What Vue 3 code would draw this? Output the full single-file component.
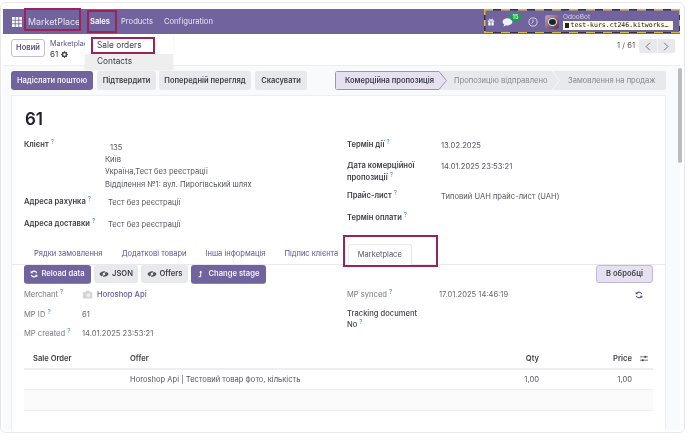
<script setup>
const leftRows = [
  { label: 'Адреса рахунка', value: 'Тест без реєстрації' },
  { label: 'Адреса доставки', value: 'Тест без реєстрації' },
]
const tabs = ['Рядки замовлення', 'Додаткові товари', 'Інша інформація', 'Підпис клієнта']
const actions = ['Підтвердити', 'Попередній перегляд', 'Скасувати']
</script>

<template>
  <div class="page">
    <div class="frame">
      <header class="nav">
        <svg class="apps" viewBox="0 0 9 9" width="10" height="10">
          <g fill="#fff">
            <rect x="0" y="0" width="2.5" height="2.5" /><rect x="3.25" y="0" width="2.5" height="2.5" /><rect x="6.5" y="0" width="2.5" height="2.5" />
            <rect x="0" y="3.25" width="2.5" height="2.5" /><rect x="3.25" y="3.25" width="2.5" height="2.5" /><rect x="6.5" y="3.25" width="2.5" height="2.5" />
            <rect x="0" y="6.5" width="2.5" height="2.5" /><rect x="3.25" y="6.5" width="2.5" height="2.5" /><rect x="6.5" y="6.5" width="2.5" height="2.5" />
          </g>
        </svg>
        <span class="brand">MarketPlace</span>
        <span class="menu strong">Sales</span>
        <span class="menu products">Products</span>
        <span class="menu config">Configuration</span>
        <div class="systray">
          <svg class="gift" viewBox="0 0 10 10" width="8" height="8">
            <path fill="#fff" d="M1 3h3.5v1.6H1zM5.5 3H9v1.6H5.5zM1.6 5.4h2.9V9.5H1.6zM5.5 5.4h2.9V9.5H5.5z" />
            <path fill="none" stroke="#fff" stroke-width=".9" d="M5 3C4 .6 2.4.8 2.8 2 3 2.7 4 3 5 3c1 0 2-.3 2.2-1C7.6.8 6 .6 5 3z" />
          </svg>
          <span class="chat">
            <svg viewBox="0 0 12 10" width="11" height="9">
              <path fill="#f2f0f7" d="M6 .4c3 0 5.5 1.7 5.5 3.9S9 8.2 6 8.2c-.6 0-1.2 0-1.7-.2L1.6 9.6l.7-2.4C1.200 6.500.5 5.400.5 4.300.5 2.100 3 .4 6 .4z" />
            </svg>
            <span class="badge">15</span>
          </span>
          <svg class="clock" viewBox="0 0 12 12" width="10" height="10">
            <circle cx="6" cy="6" r="4.9" fill="none" stroke="#e8e5f0" stroke-width="1" />
            <path fill="none" stroke="#e8e5f0" stroke-width="1" d="M6 3v3.100L4.100 8" />
          </svg>
          <span class="avatar"><i></i></span>
          <div class="user">
            <span class="user-name">OdooBot</span>
            <span class="db"><i class="db-icon"></i>test-kurs.ct246.kitworks…</span>
          </div>
        </div>
      </header>

      <section class="control">
        <button class="new">Новий</button>
        <div class="crumb">
          <span class="crumb-top">Marketplace</span>
          <span class="crumb-id">61
            <svg viewBox="0 0 10 10" width="7" height="7">
              <circle cx="5" cy="5" r="2.900" fill="none" stroke="#444" stroke-width="2" />
              <path stroke="#444" stroke-width="1.500" d="M5 .3v1.500M5 8.200v1.500M.3 5h1.500M8.200 5h1.500M1.700 1.700l1 1M7.300 7.300l1 1M8.300 1.700l-1 1M2.700 7.300l-1 1" />
            </svg>
          </span>
        </div>
        <div class="pager">
          <span class="pager-text">1 / 61</span>
          <div class="pager-btns">
            <span class="pager-btn">
              <svg viewBox="0 0 8 12" width="6" height="9"><path fill="none" stroke="#666" stroke-width="1.200" d="M6.500 1 1.500 6l5 5" /></svg>
            </span>
            <span class="pager-btn">
              <svg viewBox="0 0 8 12" width="6" height="9"><path fill="none" stroke="#666" stroke-width="1.200" d="M1.500 1l5 5-5 5" /></svg>
            </span>
          </div>
        </div>
      </section>

      <div class="body">
        <main class="content">
          <div class="actionbar">
            <div class="actions">
              <button class="btn primary">Надіслати поштою</button>
              <button v-for="a in actions" :key="a" class="btn grey">{{ a }}</button>
            </div>
            <div class="status">
              <div class="stage active">
                <svg class="stage-bg" viewBox="0 0 112 19" preserveAspectRatio="none">
                  <path d="M.5.500H104L111.500 9.500 104 18.500H.5z" fill="#e6e1f0" stroke="#9d91c0" />
                </svg>
                <span>Комерційна пропозиція</span>
              </div>
              <div class="stage second">
                <span>Пропозицію відправлено</span>
                <svg class="sep" viewBox="0 0 8 19" width="8" height="19"><path fill="none" stroke="#f6f6f8" d="M0 0l7.500 9.500L0 19" /></svg>
              </div>
              <div class="stage third"><span>Замовлення на продаж</span></div>
            </div>
          </div>

          <div class="sheet">
            <h1 class="title">61</h1>
            <div class="form">
              <div class="col left">
                <div class="client">
                  <span class="label">Клієнт<sup>?</sup></span>
                  <div class="address">
                    <span class="num">135</span>
                    <span>Київ</span>
                    <span>Україна,Тест без реєстрації</span>
                    <span>Відділення №1: вул. Пирогівський шлях</span>
                  </div>
                </div>
                <div v-for="r in leftRows" :key="r.label" class="addr-row">
                  <span class="label">{{ r.label }}<sup>?</sup></span>
                  <span class="addr-val">{{ r.value }}</span>
                </div>
              </div>
              <div class="col right">
                <div class="r-row r1">
                  <span class="label">Термін дії<sup>?</sup></span>
                  <span class="val">13.02.2025</span>
                </div>
                <div class="r-row r2">
                  <span class="label">Дата комерційної<br />пропозиції<sup>?</sup></span>
                  <span class="val">14.01.2025 23:53:21</span>
                </div>
                <div class="r-row r3">
                  <span class="label">Прайс-лист<sup>?</sup></span>
                  <span class="val">Типовий UAH прайс-лист (UAH)</span>
                </div>
                <div class="r-row r4">
                  <span class="label">Термін оплати<sup>?</sup></span>
                </div>
              </div>
            </div>

            <nav class="tabs">
              <span v-for="t in tabs" :key="t" class="tab">{{ t }}</span>
              <span class="tab current">Marketplace</span>
            </nav>

            <div class="pane">
              <div class="pane-btns">
                <button class="mp primary">
                  <svg viewBox="0 0 12 12" width="8" height="8">
                    <path fill="none" stroke="#fff" stroke-width="1.700" d="M10.200 4.600A4.500 4.500 0 0 0 2.200 3.800M1.800 7.400a4.500 4.500 0 0 0 8 .8" />
                    <path fill="#fff" d="M1 1v4h4zM11 11V7H7z" />
                  </svg>
                  Reload data
                </button>
                <button class="mp grey">
                  <svg viewBox="0 0 14 10" width="10" height="8">
                    <path fill="#555" d="M7 1C4 1 1.500 3 .5 5c1 2 3.500 4 6.500 4s5.500-2 6.500-4C12.500 3 10 1 7 1z" />
                    <circle cx="7" cy="5" r="1.800" fill="#e7e9ed" />
                    <path stroke="#e7e9ed" stroke-width="1.100" d="M10 0 4 10" />
                  </svg>
                  JSON
                </button>
                <button class="mp grey">
                  <svg viewBox="0 0 14 10" width="10" height="8">
                    <path fill="#555" d="M7 1C4 1 1.500 3 .5 5c1 2 3.500 4 6.500 4s5.500-2 6.500-4C12.500 3 10 1 7 1z" />
                    <circle cx="7" cy="5" r="1.800" fill="#e7e9ed" />
                    <path stroke="#e7e9ed" stroke-width="1.100" d="M10 0 4 10" />
                  </svg>
                  Offers
                </button>
                <button class="mp primary">
                  <svg viewBox="0 0 10 12" width="6" height="8">
                    <path fill="none" stroke="#fff" stroke-width="1.600" d="M1 10.500h3.500V2" />
                    <path fill="#fff" d="M1.800 3.500 4.500.5l2.700 3z" />
                  </svg>
                  &nbsp;Change stage
                </button>
                <button class="stage-btn">В обробці</button>
              </div>

              <div class="mp-fields">
                <div class="mp-col">
                  <div class="mp-row merchant">
                    <span class="mp-label">Merchant<sup>?</sup></span>
                    <span class="link">
                      <svg viewBox="0 0 14 11" width="11" height="9">
                        <path fill="#d5d5d8" d="M1 2.500h3L5.200.8h4L10.400 2.500H13V10.500H1z" />
                        <circle cx="8" cy="6.500" r="2.200" fill="#f2f2f3" />
                      </svg>
                      Horoshop Api
                    </span>
                  </div>
                  <div class="mp-row mpid">
                    <span class="mp-label">MP ID<sup>?</sup></span>
                    <span>61</span>
                  </div>
                  <div class="mp-row created">
                    <span class="mp-label">MP created<sup>?</sup></span>
                    <span>14.01.2025 23:53:21</span>
                  </div>
                </div>
                <div class="mp-col rightcol">
                  <div class="mp-row synced">
                    <span class="mp-label wide">MP synced<sup>?</sup></span>
                    <span>17.01.2025 14:46:19</span>
                    <svg class="sync" viewBox="0 0 12 12" width="8" height="8">
                      <path fill="none" stroke="#5b4f8c" stroke-width="1.600" d="M10.200 4.600A4.500 4.500 0 0 0 2.200 3.800M1.800 7.400a4.500 4.500 0 0 0 8 .8" />
                      <path fill="#5b4f8c" d="M1 1v4h4zM11 11V7H7z" />
                    </svg>
                  </div>
                  <div class="tracking">Tracking document<br />No<sup>?</sup></div>
                </div>
              </div>

              <div class="table">
                <div class="tr head">
                  <span class="first">Sale Order</span>
                  <span>Offer</span>
                  <span class="num-cell">Qty</span>
                  <span class="num-cell">Price</span>
                  <svg class="sliders" viewBox="0 0 12 10" width="8" height="7">
                    <path fill="none" stroke="#444" stroke-width="1.100" d="M0 2.500h12M0 7.500h12" />
                    <circle cx="8" cy="2.500" r="1.500" fill="#444" /><circle cx="4" cy="7.500" r="1.500" fill="#444" />
                  </svg>
                </div>
                <div class="tr data">
                  <span></span>
                  <span>Horoshop Api | Тестовий товар фото, кількість</span>
                  <span class="num-cell">1,00</span>
                  <span class="num-cell">1,00</span>
                  <span></span>
                </div>
                <div class="tr empty"></div>
              </div>
            </div>
          </div>
        </main>
        <aside class="scroll"><i class="thumb"></i></aside>
      </div>
    </div>

    <i class="note n-brand"></i>
    <i class="note n-sales"></i>

    <div class="dropdown">
      <span class="dd-item">Sale orders</span>
      <span class="dd-item hover">Contacts</span>
    </div>
    <i class="note n-orders"></i>
    <i class="note n-tab"></i>
    <i class="debug-box"></i>
  </div>
</template>

<style>
html, body { margin: 0; background: #fff; }
</style>

<style scoped>
.page {
  position: relative;
  width: 690px;
  height: 440px;
  overflow: hidden;
  background: #fff;
  font-family: Inter, "Noto Sans", sans-serif;
  font-size: 7.6px;
  line-height: 12px;
  color: #555760;
  filter: blur(0.5px);
  padding-top: 2px;
  box-sizing: border-box;
}
.frame {
  width: 685px;
  height: 431px;
  box-sizing: border-box;
  border: 1px solid #e8e8ea;
  border-radius: 6px;
  padding: 6px 4px 2px 2px;
  display: flex;
  flex-direction: column;
}
button { font: inherit; border: 0; padding: 0; }
sup { font-size: 6px; color: #5fa9d0; line-height: 0; margin-left: 2px; font-weight: 600; vertical-align: 3px; }

.nav {
  height: 25px;
  flex: none;
  background: #71639e;
  display: flex;
  align-items: center;
  color: #f3f1f8;
  font-size: 7.6px;
}
.apps { margin-left: 9px; }
.brand { margin-left: 6px; font-size: 8.9px; width: 62px; color: #e6e3ef; }
.menu.strong { font-weight: 600; width: 31px; color: #fff; }
.products { width: 43px; color: #e9e6f2; }
.config { color: #e9e6f2; }
.systray { margin-left: auto; display: flex; align-items: center; width: 196px; height: 100%; position: relative; }
.gift { margin-left: 3px; }
.chat { position: relative; margin-left: 7px; display: flex; margin-top: 2px; }
.badge {
  position: absolute; left: 8px; top: -5px;
  width: 11px; height: 8px; border-radius: 4px;
  background: #17a04c; color: #e8f8ee;
  font-size: 5.500px; line-height: 8px; text-align: center; font-weight: 600;
}
.clock { margin-left: 15px; }
.avatar {
  margin-left: 7px; width: 14px; height: 14px; border-radius: 3px;
  background: linear-gradient(135deg, #c2a8bb, #5d2f4e);
  display: flex; align-items: center; justify-content: center;
}
.avatar i { width: 9px; height: 8px; border-radius: 50%; background: #16282c; border: 1px solid #f0f0f0; box-sizing: border-box; }
.user { margin-left: 4px; display: flex; flex-direction: column; }
.user-name { font-size: 6.500px; line-height: 7px; color: #d9d5e6; margin-top: 0; }
.db {
  width: 110px; height: 9px; margin-top: 0; background: #fbfbe8; color: #222;
  font-family: "DejaVu Sans Mono", "Liberation Mono", monospace;
  font-size: 6.500px; line-height: 9px; white-space: nowrap; overflow: hidden;
  display: flex; align-items: center; padding-left: 2px; box-sizing: border-box;
}
.db-icon { width: 3.500px; height: 5px; background: #222; margin-right: 2px; flex: none; }

.control {
  height: 32px; flex: none;
  background: #fff;
  border-bottom: 1px solid #eeeef0;
  box-sizing: border-box;
  display: flex;
  position: relative;
}
.new {
  width: 34px; height: 18px; margin: 5px 0 0 8px;
  background: #fff; border: 1px solid #c5bddb; border-radius: 3px;
  color: #5b5080; font-weight: 600; font-size: 7.600px; box-sizing: border-box;
}
.crumb { margin: 5px 0 0 5px; display: flex; flex-direction: column; width: 36px; }
.crumb-top { font-size: 7.200px; line-height: 9px; color: #5f538c; white-space: nowrap; }
.crumb-id { font-size: 8px; line-height: 12px; color: #333; white-space: nowrap; display: flex; align-items: center; gap: 3px; }
.pager { margin-left: auto; margin-right: 5px; display: flex; align-items: flex-start; padding-top: 5px; }
.pager-text { margin-top: 1px; margin-right: 4px; color: #555; }
.pager-btns { display: flex; gap: 0; width: 36px; height: 14px; background: #e7e9ed; border-radius: 2px; }
.pager-btn { flex: 1; display: flex; align-items: center; justify-content: center; }
.pager-btn + .pager-btn { border-left: 1px solid #f4f4f6; }

.body { flex: 1; min-height: 0; display: flex; background: #f9fafb; }
.content { width: 663px; flex: none; padding-left: 8px; box-sizing: border-box; display: flex; flex-direction: column; }
.scroll { flex: 1; padding: 2px 0 0 12px; box-sizing: border-box; }
.thumb { display: block; width: 4px; height: 95px; background: #bcbcc0; border-radius: 2px; }

.actionbar { display: flex; justify-content: space-between; margin-top: 5px; height: 19px; flex: none; }
.actions { display: flex; gap: 3px; }
.btn { height: 19px; border-radius: 3px; font-weight: 600; font-size: 7.500px; }
.btn:nth-child(1) { width: 82px; margin-right: 1px; }
.btn:nth-child(2) { width: 59px; }
.btn:nth-child(3) { width: 92px; margin-right: 1px; }
.btn:nth-child(4) { width: 52px; }
.primary { background: #71639e; color: #f3f1f8; }
.grey { background: #e7e9ed; color: #3d3f46; }
.status { width: 331px; height: 19px; background: #e7e9ed; border-radius: 3px; display: flex; overflow: hidden; color: #85878f; white-space: nowrap; }
.stage { position: relative; display: flex; align-items: center; height: 19px; }
.stage.active { width: 112px; padding-left: 10px; box-sizing: border-box; color: #3d3f46; font-weight: 600; font-size: 7.500px; }
.stage.active span { position: relative; }
.stage-bg { position: absolute; left: 0; top: 0; width: 112px; height: 19px; }
.stage.second { margin-left: 7px; width: 106px; }
.sep { position: absolute; right: 0; top: 0; }
.stage.third { margin-left: 8px; }

.sheet { flex: 1; margin-top: 5px; background: #fff; border: 1px solid #eceef1; border-bottom: 0; padding: 0 12px; min-height: 0; }
.title { margin: 13px 0 0; font-size: 17px; line-height: 20px; font-weight: 600; color: #22232a; padding-left: 1px; }
.form { display: grid; grid-template-columns: 323px 1fr; margin-top: 10px; }
.label { font-weight: 600; color: #3d3f46; }
.client { display: flex; }
.client .label { width: 81px; flex: none; }
.address { display: flex; flex-direction: column; margin-top: 3px; }
.address span { line-height: 12.200px; }
.address .num { padding-left: 5px; }
.addr-row { display: flex; margin-top: 5px; height: 17px; }
.addr-row .label { width: 84px; flex: none; }
.addr-val { margin-top: 1px; }
.addr-row + .addr-row { margin-top: 5px; }
.r-row { display: flex; }
.r-row .label { width: 94px; flex: none; }
.val { margin-top: 1px; }
.r2 { margin-top: 8px; }
.r3 { margin-top: 6px; }
.r4 { margin-top: 9px; }

.tabs {
  display: flex; align-items: flex-end; height: 21px; margin: 8px -12px 0; padding-left: 12.500px;
  border-bottom: 1px solid #e9e9ec; color: #5f538c; box-sizing: content-box;
}
.tab { padding: 0 9.500px 5px; white-space: nowrap; font-size: 7.500px; line-height: 11px; }
.tab.current {
  color: #555760; background: #fff; border: 1px solid #e9e9ec; border-bottom: 0;
  border-radius: 3px 3px 0 0; margin: 0 0 -1px 0; padding: 4px 9px 5px; height: 21px; box-sizing: border-box;
}

.pane-btns { display: flex; gap: 3px; height: 18px; }
.mp {
  height: 18px; border-radius: 3px; font-weight: 600; font-size: 7.600px;
  display: flex; align-items: center; justify-content: center; gap: 3px;
}
.mp.primary { box-shadow: 0 1px 0 #8d81b4; }
.mp:nth-child(1) { width: 67px; }
.mp:nth-child(2) { width: 44px; }
.mp:nth-child(3) { width: 47px; }
.mp:nth-child(4) { width: 75px; }
.stage-btn {
  margin-left: auto; width: 57px; height: 18px;
  background: #e6e1f0; border: 1px solid #c2b9da; border-radius: 3px; box-sizing: border-box;
  color: #3d3f46; font-weight: 600; font-size: 7.600px;
}
.mp-fields { display: grid; grid-template-columns: 323px 1fr; margin-top: 6px; height: 54px; }
.mp-label { color: #777983; width: 58px; flex: none; white-space: nowrap; }
.mp-label.wide { width: 92px; }
.mp-row { display: flex; align-items: center; height: 12px; position: relative; color: #666871; }
.mp-row.mpid { margin-top: 8px; }
.mp-row.created { margin-top: 7px; }
.link { color: #6557a0; display: flex; align-items: center; gap: 4px; font-weight: 500; }
.sync { position: absolute; right: 10px; top: 2px; }
.rightcol { display: flex; flex-direction: column; }
.tracking { margin-top: 7px; color: #444650; font-weight: 500; line-height: 11.500px; }

.table { margin-top: 6px; color: #555760; }
.tr { display: grid; grid-template-columns: 106px 309px 100px 93px 21px; align-items: center; }
.head { height: 18px; font-weight: 600; color: #3d3f46; border-bottom: 2px solid #eeeef0; box-sizing: content-box; padding-top: 1px; }
.first { padding-left: 9px; }
.num-cell { text-align: right; }
.sliders { margin-left: 8px; }
.data { height: 18px; padding-top: 1px; border-bottom: 1px solid #eeeef0; box-sizing: content-box; }
.empty { height: 20px; background: #fbfbfc; border-bottom: 1px solid #eeeef0; }

.note { position: absolute; border: 2px solid #9b2358; box-sizing: border-box; pointer-events: none; }
.n-brand { left: 24px; top: 8px; width: 57px; height: 23px; }
.n-sales { left: 87px; top: 10px; width: 30px; height: 23px; }
.n-orders { left: 91px; top: 37px; width: 64px; height: 17px; }
.n-tab { left: 343px; top: 235px; width: 95px; height: 32px; }

.dropdown {
  position: absolute; left: 85px; top: 34px; width: 88px; height: 35px;
  background: #fff; box-shadow: 0 1px 2px rgba(0,0,0,.08);
  display: flex; flex-direction: column; padding-top: 4px; box-sizing: border-box; color: #3d3f46;
}
.dd-item { height: 15px; line-height: 15px; padding-left: 12px; font-size: 8.300px; }
.dd-item.hover { background: #eeeeee; margin-top: 1px; }

.debug-box {
  position: absolute; left: 484px; top: 9px; width: 196px; height: 24px;
  background:
    repeating-linear-gradient(90deg, #d9b93f 0 9px, #37324f 9px 17px) left top / 100% 1.500px no-repeat,
    repeating-linear-gradient(90deg, #d9b93f 0 9px, #37324f 9px 17px) left bottom / 100% 1.500px no-repeat,
    repeating-linear-gradient(180deg, #d9b93f 0 6px, #37324f 6px 11px) left top / 1.500px 100% no-repeat,
    repeating-linear-gradient(180deg, #d9b93f 0 6px, #37324f 6px 11px) right top / 1.500px 100% no-repeat;
}
</style>
